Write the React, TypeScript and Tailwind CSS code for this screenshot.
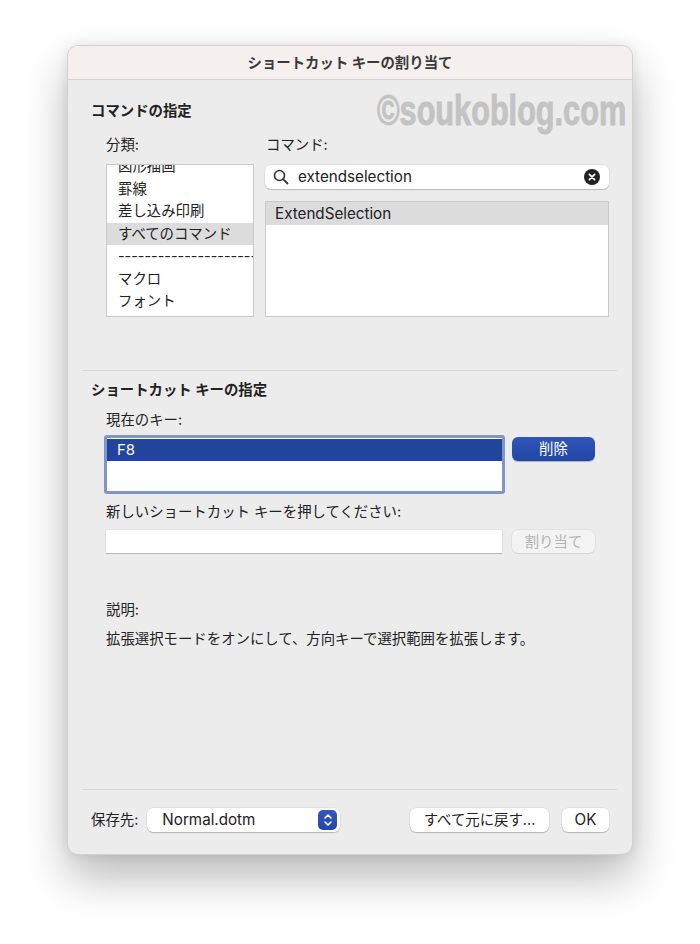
import React from "react";

const JP = { fontFamily: 'Inter, "Noto Sans CJK JP", sans-serif' };

function SearchIcon() {
  return (
    <svg width="16" height="16" viewBox="0 0 16 16" fill="none">
      <circle cx="6.5" cy="6.5" r="5" stroke="#333" strokeWidth="1.6" />
      <path d="M10.3 10.3 L14.5 14.5" stroke="#333" strokeWidth="1.8" strokeLinecap="round" />
    </svg>
  );
}

function ClearIcon() {
  return (
    <svg width="16" height="16" viewBox="0 0 16 16">
      <circle cx="8" cy="8" r="8" fill="#222" />
      <path d="M5.4 5.4 L10.6 10.6 M10.6 5.4 L5.4 10.6" stroke="#fff" strokeWidth="1.8" strokeLinecap="round" />
    </svg>
  );
}

function Stepper() {
  return (
    <div className="w-[19px] h-[20px] rounded-[5px] bg-gradient-to-b from-[#3358bf] to-[#2346a6] flex items-center justify-center">
      <svg width="10" height="14" viewBox="0 0 10 14" fill="none">
        <path d="M2 5 L5 2 L8 5" stroke="#fff" strokeWidth="1.6" strokeLinecap="round" strokeLinejoin="round" />
        <path d="M2 9 L5 12 L8 9" stroke="#fff" strokeWidth="1.6" strokeLinecap="round" strokeLinejoin="round" />
      </svg>
    </div>
  );
}

export default function App() {
  const cats = ["図形描画", "罫線", "差し込み印刷", "すべてのコマンド", "----------------------------------", "マクロ", "フォント"];
  return (
    <div className="w-full h-[944px] bg-white pt-[45px] pl-[67px] text-[14.4px] text-[#222]" style={JP}>
      <div className="relative w-[566px] h-[810px] rounded-[11px] bg-[#ececec] border border-[#d2d2d2] shadow-[0_22px_45px_rgba(0,0,0,0.28),0_0_12px_rgba(0,0,0,0.08)] flex flex-col overflow-hidden">
        {/* Title bar */}
        <div className="h-[34px] shrink-0 bg-[#f5f0ee] border-b border-[#d6d2d0] flex items-center justify-center">
          <span className="font-bold text-[14.4px] text-[#3a3a3a]">ショートカット キーの割り当て</span>
        </div>

        {/* watermark */}
        <div
          className="absolute left-[309px] top-[44px] text-[42px] font-bold text-[#c3c3c3] leading-none whitespace-nowrap origin-left scale-x-[0.73] [-webkit-text-stroke:1px_#c3c3c3]"
          style={{ fontFamily: '"Liberation Sans", sans-serif' }}
        >
          ©soukoblog.com
        </div>

        <div className="pl-[23px] pt-[21px] leading-[20px] font-bold">コマンドの指定</div>

        <div className="flex mt-[14px] pl-[38px]">
          <div className="w-[148px]">
            <div className="leading-[20px]">分類:</div>
          </div>
          <div className="ml-[11px] pl-[1px] leading-[20px]">コマンド:</div>
        </div>

        <div className="flex mt-[9px] pl-[38px]">
          <div className="w-[148px] h-[153px] bg-white border border-[#cacaca] overflow-hidden">
            <div className="mt-[-10px]">
              {cats.map((c, i) => (
                <div
                  key={i}
                  className={`h-[22.5px] leading-[22.5px] pl-[11px] whitespace-nowrap overflow-hidden ${i === 3 ? "bg-[#dcdcdc]" : ""}`}
                >
                  {c}
                </div>
              ))}
            </div>
          </div>
          <div className="ml-[11px] w-[344px] flex flex-col">
            <div className="h-[24px] mt-[1px] rounded-[6px] bg-white shadow-[0_1px_1px_rgba(0,0,0,0.18),0_0_0_0.5px_rgba(0,0,0,0.08)] flex items-center pl-[8px] pr-[9px]">
              <SearchIcon />
              <span className="ml-[9px] flex-1 text-[15.2px] text-[#222]">extendselection</span>
              <ClearIcon />
            </div>
            <div className="mt-[12px] h-[116px] bg-white border border-[#cacaca]">
              <div className="h-[23px] leading-[23px] bg-[#dcdcdc] pl-[9px] text-[15.2px]">ExtendSelection</div>
            </div>
          </div>
        </div>

        <div className="mx-[15px] mt-[53px] h-px bg-[#d9d9d9]" />

        <div className="pl-[23px] mt-[9px] leading-[20px] font-bold">ショートカット キーの指定</div>
        <div className="pl-[38px] mt-[10px] leading-[20px]">現在のキー:</div>

        <div className="flex mt-[5px] pl-[36px]">
          <div className="w-[401px] h-[59px] rounded-[3px] bg-[#8094c7] p-[3px]">
            <div className="w-full h-full bg-white pt-[1px]">
              <div className="h-[22px] leading-[22px] bg-[#21449d] text-white pl-[10px] text-[15px]">F8</div>
            </div>
          </div>
          <div className="ml-[7px] mt-[2px] w-[83px] h-[24px] rounded-[6px] bg-gradient-to-b from-[#3257bb] to-[#2145a2] shadow-[0_1px_1px_rgba(0,0,0,0.25)] text-white flex items-center justify-center">
            削除
          </div>
        </div>

        <div className="pl-[38px] mt-[8px] leading-[20px]">新しいショートカット キーを押してください:</div>

        <div className="flex mt-[8px] pl-[38px]">
          <div className="w-[396px] h-[23px] bg-white shadow-[0_1px_1px_rgba(0,0,0,0.18),0_0_0_0.5px_rgba(0,0,0,0.06)]" />
          <div className="ml-[10px] w-[83px] h-[23px] rounded-[6px] bg-[#f3f3f3] shadow-[0_0_0_0.5px_rgba(0,0,0,0.08),0_1px_1px_rgba(0,0,0,0.06)] text-[#b2b2b2] flex items-center justify-center">
            割り当て
          </div>
        </div>

        <div className="pl-[38px] mt-[47px] leading-[20px]">説明:</div>
        <div className="pl-[38px] mt-[9px] leading-[20px]">拡張選択モードをオンにして、方向キーで選択範囲を拡張します。</div>

        <div className="flex-1" />

        <div className="mx-[15px] h-px bg-[#d9d9d9]" />

        <div className="flex items-center h-[64px] pl-[23px] pr-[23px] pb-[4px]">
          <span className="leading-[20px]">保存先:</span>
          <div className="ml-[9px] w-[193px] h-[24px] rounded-[6px] bg-white shadow-[0_1px_1px_rgba(0,0,0,0.2),0_0_0_0.5px_rgba(0,0,0,0.08)] flex items-center pl-[15px] pr-[3px]">
            <span className="flex-1 text-[15.2px]">Normal.dotm</span>
            <Stepper />
          </div>
          <div className="flex-1" />
          <div className="w-[139px] h-[24px] rounded-[6px] bg-white shadow-[0_1px_1px_rgba(0,0,0,0.2),0_0_0_0.5px_rgba(0,0,0,0.08)] flex items-center justify-center">
            すべて元に戻す...
          </div>
          <div className="ml-[13px] w-[47px] h-[24px] rounded-[6px] bg-white shadow-[0_1px_1px_rgba(0,0,0,0.2),0_0_0_0.5px_rgba(0,0,0,0.08)] flex items-center justify-center text-[15.2px]">
            OK
          </div>
        </div>
      </div>
    </div>
  );
}
